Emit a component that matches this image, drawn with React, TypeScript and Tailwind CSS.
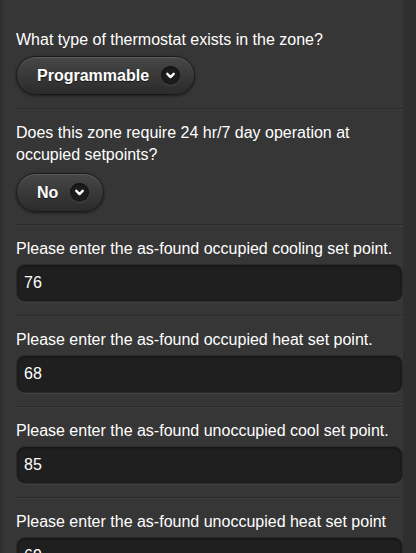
import { useState } from 'react';

const Chevron = () => (
  <span className="ml-3 flex h-[19px] w-[19px] items-center justify-center rounded-full bg-[#1c1c1c] shadow-[inset_0_1px_2px_rgba(0,0,0,0.6),0_1px_0_rgba(255,255,255,0.12)]">
    <svg width="11" height="11" viewBox="0 0 12 12" fill="none">
      <path d="M2.5 4.2 6 7.7 9.5 4.2" stroke="#fff" strokeWidth="2.6" strokeLinecap="round" strokeLinejoin="round" />
    </svg>
  </span>
);

const SelectButton = ({ label }: { label: string }) => (
  <button
    type="button"
    className="flex h-[39px] items-center rounded-full border border-[#1a1a1a] bg-gradient-to-b from-[#474747] to-[#2b2b2b] pl-[20px] pr-[14px] text-[16px] font-bold text-white shadow-[0_1px_3px_rgba(0,0,0,0.5),inset_0_1px_0_rgba(255,255,255,0.12)] [text-shadow:0_1px_0_#111]"
  >
    {label}
    <Chevron />
  </button>
);

const Field = ({ label, value }: { label: string; value: string }) => {
  const [v, setV] = useState(value);
  return (
    <div className="border-t border-[#2a2a2a] pt-[13px] pb-[13px] shadow-[inset_0_1px_0_rgba(255,255,255,0.04)]">
      <label className="block text-[16px] leading-[22px] text-white">{label}</label>
      <input
        value={v}
        onChange={e => setV(e.target.value)}
        className="mt-[4px] block h-[38px] w-full rounded-[9px] border border-[#2b2b2b] bg-[#1f1f1f] px-[7px] text-[16px] text-white shadow-[inset_0_1px_3px_rgba(0,0,0,0.4),0_1px_0_rgba(255,255,255,0.05)] focus:outline-none"
      />
    </div>
  );
};

export default function App() {
  return (
    <div className="h-[553px] overflow-hidden bg-[#2f2f2f] font-['Liberation_Sans',Arial,sans-serif]">
      <div className="ml-[3px] h-full w-[400px] bg-[#363636] pl-[13px]">
        <div className="pt-[29px] pb-[13px]">
          <label className="block text-[16px] leading-[22px] text-white">What type of thermostat exists in the zone?</label>
          <div className="mt-[5px] flex">
            <SelectButton label="Programmable" />
          </div>
        </div>
        <div className="border-t border-[#2a2a2a] pt-[13px] pb-[12px] shadow-[inset_0_1px_0_rgba(255,255,255,0.04)]">
          <label className="block text-[16px] leading-[22px] text-white">
            Does this zone require 24 hr/7 day operation at occupied setpoints?
          </label>
          <div className="mt-[7px] flex">
            <SelectButton label="No" />
          </div>
        </div>
        <Field label="Please enter the as-found occupied cooling set point." value="76" />
        <Field label="Please enter the as-found occupied heat set point." value="68" />
        <Field label="Please enter the as-found unoccupied cool set point." value="85" />
        <Field label="Please enter the as-found unoccupied heat set point" value="69" />
      </div>
    </div>
  );
}
